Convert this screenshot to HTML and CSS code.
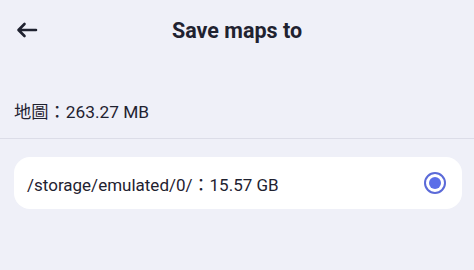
FILE: index.html
```html
<!DOCTYPE html>
<html>
<head>
  <title>Save maps to</title>
  <meta name="viewport" content="width=device-width, initial-scale=1">
  <link rel="stylesheet" href="styles.css">
</head>
<body>
  <div class="toolbar">
    <button class="back" aria-label="Back">
      <svg width="22" height="16" viewBox="0 0 22 16">
        <path d="M20 8H3M8.5 2L2.5 8l6 6" fill="none" stroke="#1f2230" stroke-width="2.6" stroke-linecap="round" stroke-linejoin="round"/>
      </svg>
    </button>
    <h1 class="title">Save maps to</h1>
  </div>

  <div class="usage">地圖：263.27 MB</div>

  <div class="list">
    <label class="option">
      <span class="path">/storage/emulated/0/：15.57 GB</span>
      <span class="radio checked"></span>
    </label>
  </div>
</body>
</html>
```

FILE: styles.css
```css
/* Page */
body {
  margin: 0;
  background: #eff0f8;
  font-family: Roboto, "Noto Sans CJK TC", sans-serif;
  color: #1f2230;
}

/* Top bar */
.toolbar {
  position: relative;
  height: 60px;
  display: flex;
  align-items: center;
  justify-content: center;
}

.back {
  position: absolute;
  left: 16px;
  top: 22px;
  padding: 0;
  border: 0;
  background: none;
  width: 22px;
  height: 16px;
  line-height: 0;
}

.title {
  margin: 0;
  font-size: 21.5px;
  font-weight: 700;
}

/* Size of saved maps */
.usage {
  padding: 38px 14px 0;
  height: 40px;
  font-size: 17.3px;
  border-bottom: 1px solid #dcdde8;
}

/* Storage list */
.list {
  padding: 18px 12px 0 14px;
}

.option {
  display: flex;
  align-items: center;
  justify-content: space-between;
  height: 52px;
  padding: 0 16px 0 13px;
  background: #fff;
  border-radius: 16px;
  font-size: 17px;
}

.radio {
  width: 22px;
  height: 22px;
  border: 2.5px solid #5b6ad8;
  border-radius: 50%;
  box-sizing: border-box;
  display: flex;
  align-items: center;
  justify-content: center;
}

.radio.checked::after {
  content: "";
  width: 12px;
  height: 12px;
  border-radius: 50%;
  background: #5b6ee8;
}
```
